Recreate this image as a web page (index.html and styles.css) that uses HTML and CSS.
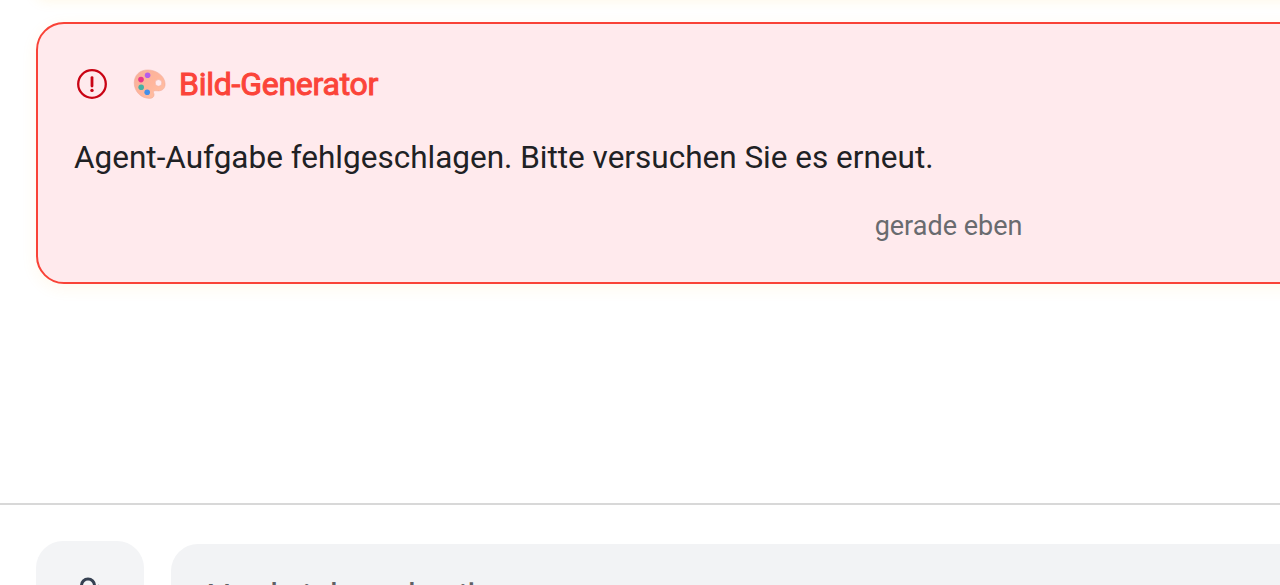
FILE: index.html
```html
<!DOCTYPE html>
<html lang="de">
<head>
<meta charset="utf-8">
<title>Chat</title>
<link rel="stylesheet" href="styles.css">
</head>
<body>
<main class="chat">
  <section class="messages">
    <div class="previous"></div>
    <article class="card">
      <header class="card-head">
        <svg class="alert" viewBox="0 0 32 32" fill="none" stroke="#c90414">
          <circle cx="16" cy="16" r="13.8" stroke-width="2.3"/>
          <path d="M16 9.600v8.400" stroke-width="2.800" stroke-linecap="round"/>
          <circle cx="16" cy="22.400" r="1.700" fill="#c90414" stroke="none"/>
        </svg>
        <svg class="palette" viewBox="0 0 34 32">
          <defs>
            <linearGradient id="wood" x1="0" y1="0" x2="1" y2="1">
              <stop offset="0" stop-color="#f5b19b"/><stop offset=".5" stop-color="#ffb59b"/><stop offset="1" stop-color="#ffc2a5"/>
            </linearGradient>
          </defs>
          <path fill="url(#wood)" fill-rule="evenodd" stroke="#efa697" stroke-width=".5" d="M15.5 1.9C7.700 1.900 2.200 7.300 2.200 14.800C2.200 23.500 8.900 30.400 17.500 30.400C20.300 30.400 22.200 28.900 22.100 26.700C22 24.800 20.500 23.800 22.200 23C24 22.200 26.400 23.700 29.500 22.300C32.200 21.100 33.200 18.600 33.100 15.800C32.800 7.700 24.300 1.900 15.500 1.900ZM26.500 11.600a3.300 3.300 0 1 1 0 6.600a3.300 3.300 0 1 1 0-6.600Z"/>
          <circle cx="15.600" cy="7.300" r="2.800" fill="#b55cec"/>
          <circle cx="9" cy="11.600" r="2.800" fill="#eb3789"/>
          <circle cx="9.200" cy="19.300" r="2.800" fill="#45b1a4"/>
          <circle cx="15.200" cy="24.300" r="2.800" fill="#438fe9"/>
        </svg>
        <h2 class="agent">Bild-Generator</h2>
      </header>
      <p class="text">Agent-Aufgabe fehlgeschlagen. Bitte versuchen Sie es erneut.</p>
      <time class="time">gerade eben</time>
    </article>
  </section>
  <footer class="composer">
    <button class="attach" aria-label="Datei anhängen">
      <svg class="clip" viewBox="0 0 40 40" fill="none" stroke="#364152" stroke-width="3" stroke-linecap="round">
        <path d="M11.500 28V10.500a6.500 6.500 0 0 1 13 0V28a4 4 0 0 1-8 0V13"/>
        <path stroke-width="1.500" stroke-opacity=".6" d="M28.500 10.300v18"/>
      </svg>
    </button>
    <div class="field">Nachricht schreiben...</div>
  </footer>
</main>
</body>
</html>
```
FILE: styles.css
```css
* { box-sizing: border-box; }
html { overflow: hidden; }
body {
  margin: 0;
  height: 585px;
  overflow: hidden;
  background: #fff;
  font-family: Roboto, sans-serif;
}
.chat {
  display: flex;
  flex-direction: column;
  width: 100%;
  height: 585px;
  overflow: hidden;
}
.messages { flex: none; height: 503px; padding-left: 36px; overflow: hidden; }
.previous {
  width: 1868px;
  height: 20px;
  margin-top: -20px;
  margin-bottom: 22px;
  border-radius: 28px;
  box-shadow: 0 0 14px rgba(255, 190, 40, .13);
}
.card {
  display: flex;
  flex-direction: column;
  width: 1868px;
  height: 262px;
  padding: 41px 36px 0;
  border: 2px solid #f94237;
  border-radius: 28px;
  background: #ffeaed;
  box-shadow: 0 4px 16px rgba(255, 180, 40, .09);
}
.card-head { display: flex; align-items: center; height: 38px; }
.alert { width: 32px; height: 32px; margin-left: 2px; }
.palette { width: 34px; height: 32px; margin-left: 24px; }
.agent {
  margin: 0 0 0 13px;
  color: #fb4439;
  font-size: 32px;
  line-height: 38px;
  font-weight: 400;
  letter-spacing: -.25px;
  -webkit-text-stroke: 1px #fb4439;
}
.text {
  margin: 30px 0 0;
  color: #202124;
  font-size: 31.5px;
  line-height: 50px;
  white-space: nowrap;
}
.time {
  width: 1749px;
  margin-top: 26px;
  color: #696b6f;
  font-size: 27px;
  line-height: 34px;
  text-align: center;
}
.composer {
  flex: none;
  display: flex;
  align-items: flex-start;
  gap: 27px;
  width: 1940px;
  height: 82px;
  padding: 36px 36px 0;
  border-top: 2px solid #d8d8d8;
  overflow: hidden;
}
.attach {
  flex: none;
  display: flex;
  justify-content: center;
  width: 108px;
  height: 108px;
  padding: 34px 0 0;
  border: 0;
  border-radius: 27px;
  background: #f3f4f6;
}
.clip { width: 40px; height: 40px; }
.field {
  flex: 1;
  height: 102px;
  margin-top: 3px;
  padding: 35px 35px 0;
  border-radius: 27px;
  background: #f2f3f5;
  color: #5f6165;
  font-size: 36px;
  line-height: 38px;
}
```
